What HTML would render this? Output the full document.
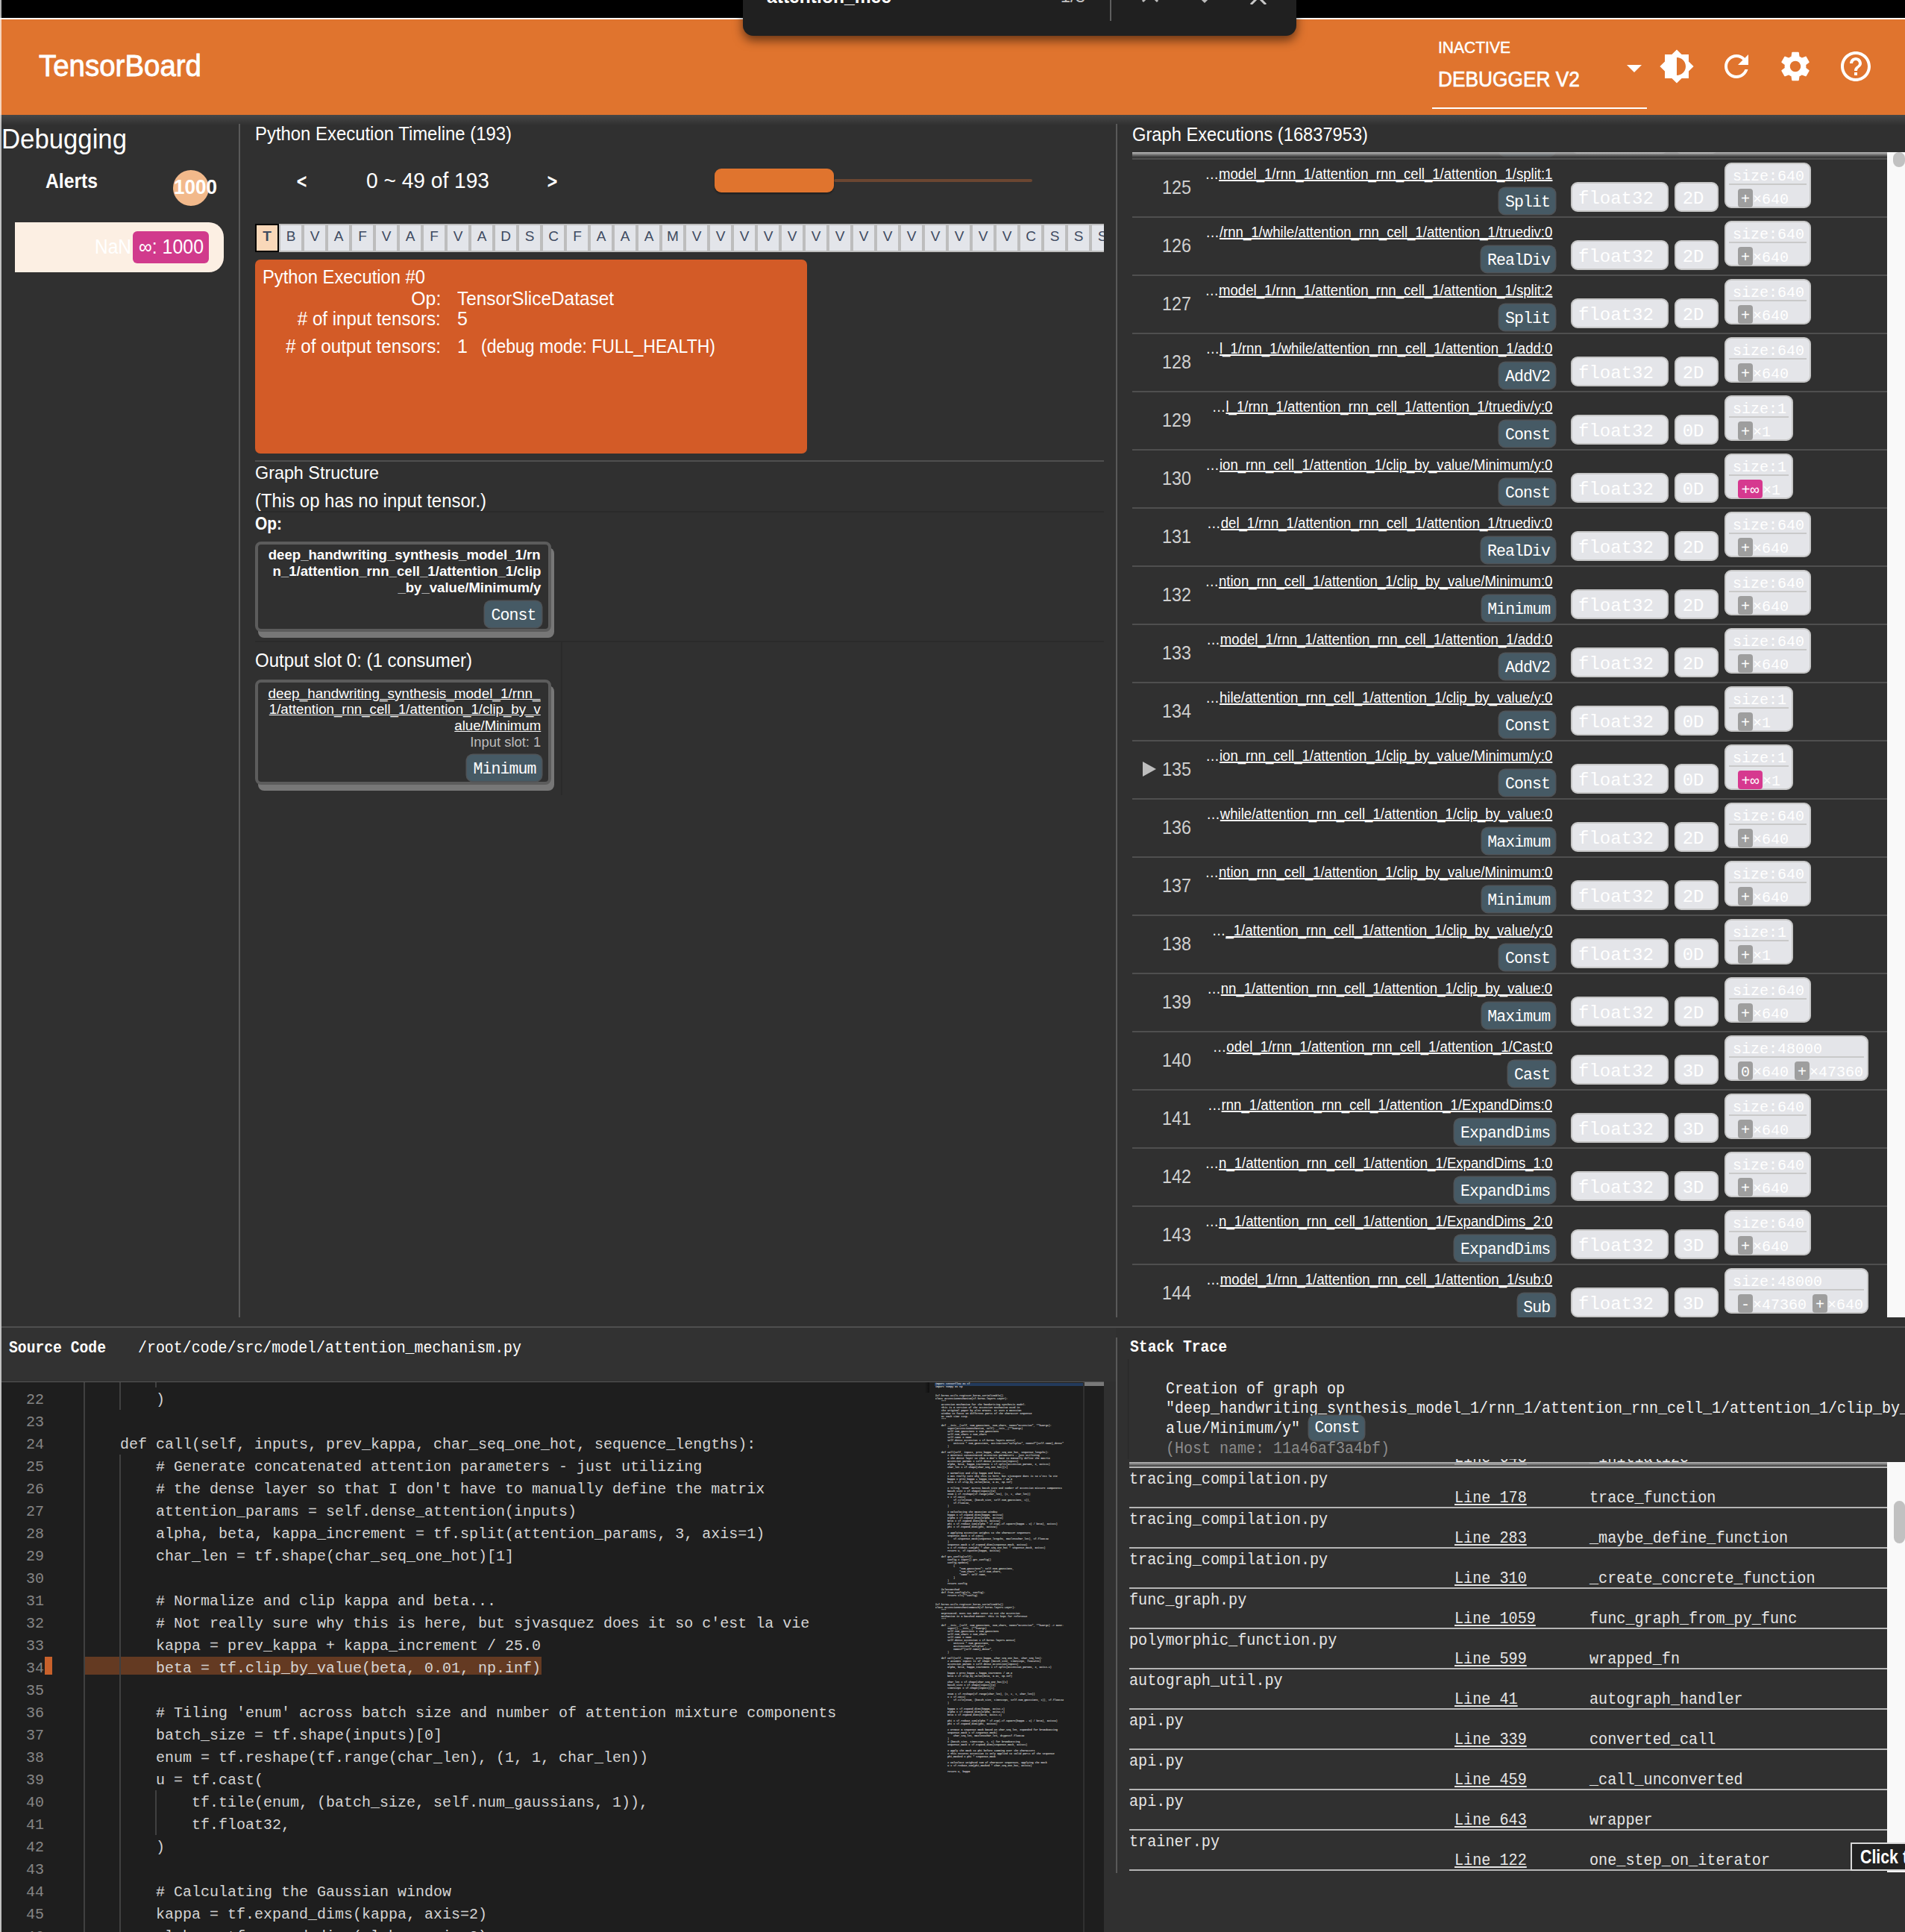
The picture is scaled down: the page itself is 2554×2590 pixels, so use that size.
<!DOCTYPE html><html><head><meta charset="utf-8"><style>
html,body{margin:0;padding:0;}
body{width:2554px;height:2590px;background:#303030;position:relative;overflow:hidden;font-family:'Liberation Sans',sans-serif;}
.r{position:absolute;}
.t{position:absolute;line-height:1;white-space:pre;width:max-content;}
.cell{position:absolute;top:0;width:28px;height:34px;border:2px solid #bdbdbd;background:#e3e5ea;color:#3e4a60;font:19px/30px 'Liberation Sans',sans-serif;text-align:center;}
.cell.sel{border-color:#000;background:#f9d8b9;font-weight:700;}
.chip{position:absolute;box-sizing:border-box;background:#465a65;box-shadow:0 0 0 1.5px #4f5357;border-radius:8px;color:#fff;font:21.5px/39px 'Liberation Mono',monospace;letter-spacing:-0.9px;text-indent:0.9px;text-align:center;}
.lchip{position:absolute;box-sizing:border-box;background:#e4e5e9;border:2px solid #c6c6c6;border-radius:9px;}
.lchip span{position:absolute;top:3px;line-height:35px;font-family:'Liberation Mono',monospace;font-size:24px;color:#fff;white-space:pre;}
.sbox{position:absolute;box-sizing:border-box;background:#e4e5e9;border:2px solid #c6c6c6;border-radius:9px;}
.stxt{position:absolute;left:9px;top:5px;font:20px/24px 'Liberation Mono',monospace;color:#fff;white-space:pre;}
.sdiv{position:absolute;left:4px;top:26px;height:2px;background:#c9c9c9;}
.pchip{position:absolute;top:33px;width:20px;height:25px;background:#9e9e9e;border-radius:4px;color:#fff;font:20px/30px 'Liberation Mono',monospace;text-align:center;}
.pchip.pink{background:#d6398f;}
.ptxt{position:absolute;top:35px;font:20px/25px 'Liberation Mono',monospace;color:#fff;white-space:pre;}
</style></head><body>
<div class="r" style="left:0px;top:0px;width:2554px;height:24px;background:#000;"></div>
<div class="r" style="left:0px;top:24px;width:2554px;height:2px;background:#fff;"></div>
<div class="r" style="left:0px;top:26px;width:2554px;height:128px;background:#e0742e;"></div>
<div class="r" style="left:0px;top:154px;width:2554px;height:14px;background:linear-gradient(#474747,#303030);"></div>
<div id="title" class="t" style="left:52px;top:68.29px;font-family:'Liberation Sans', sans-serif;font-size:41px;font-weight:400;color:#fff;transform:scaleX(0.9378);transform-origin:left 0;-webkit-text-stroke:0.9px #fff;">TensorBoard</div>
<div id="inactive" class="t" style="left:1928px;top:52.88px;font-family:'Liberation Sans', sans-serif;font-size:22px;font-weight:400;color:#fff;transform:scaleX(0.9560);transform-origin:left 0;-webkit-text-stroke:0.5px #fff;">INACTIVE</div>
<div id="dbg" class="t" style="left:1928px;top:90.61px;font-family:'Liberation Sans', sans-serif;font-size:30px;font-weight:400;color:#fff;transform:scaleX(0.8766);transform-origin:left 0;-webkit-text-stroke:0.7px #fff;">DEBUGGER V2</div>
<div class="r" style="left:1920px;top:144px;width:288px;height:2px;background:#fff;"></div>
<svg class="r" style="left:2180px;top:86px" width="22" height="12" viewBox="0 0 22 12"><path d="M1 1h20L11 11z" fill="#fff"/></svg>
<svg class="r" style="left:2224px;top:65px" width="48" height="48" viewBox="0 0 24 24"><path fill="#fff" fill-rule="evenodd" d="M20 15.31L23.31 12 20 8.69V4h-4.69L12 .69 8.69 4H4v4.69L.69 12 4 15.31V20h4.69L12 23.31 15.31 20H20v-4.69zM12 18V6c3.31 0 6 2.69 6 6s-2.69 6-6 6z"/></svg>
<svg class="r" style="left:2304px;top:65px" width="48" height="48" viewBox="0 0 24 24"><path fill="#fff" fill-rule="evenodd" d="M17.65 6.35C16.2 4.9 14.21 4 12 4c-4.42 0-7.99 3.58-7.99 8s3.57 8 7.99 8c3.73 0 6.84-2.55 7.73-6h-2.08c-.82 2.33-3.04 4-5.65 4-3.31 0-6-2.69-6-6s2.69-6 6-6c1.66 0 3.140.69 4.22 1.78L13 11h7V4l-2.35 2.35z"/></svg>
<svg class="r" style="left:2383px;top:65px" width="48" height="48" viewBox="0 0 24 24"><path fill="#fff" fill-rule="evenodd" d="M19.14 12.94c.04-.3.06-.61.06-.94 0-.32-.02-.64-.07-.94l2.03-1.58c.18-.14.23-.41.12-.61l-1.92-3.32c-.12-.22-.37-.29-.59-.22l-2.39.96c-.5-.38-1.03-.7-1.62-.94l-.36-2.54c-.04-.24-.24-.41-.48-.41h-3.84c-.24 0-.43.17-.47.41l-.36 2.54c-.59.24-1.13.57-1.62.94l-2.39-.96c-.22-.08-.47 0-.59.22L2.74 8.87c-.12.21-.08.47.12.61l2.03 1.58c-.05.3-.09.63-.09.94s.02.64.07.94l-2.030 1.58c-.18.14-.23.41-.12.61l1.92 3.32c.12.22.37.29.59.22l2.39-.96c.5.38 1.03.7 1.62.94l.36 2.54c.05.24.24.41.48.41h3.84c.24 0 .44-.17.47-.41l.36-2.54c.59-.24 1.13-.56 1.62-.94l2.39.96c.22.08.47 0 .59-.22l1.92-3.32c.12-.22.07-.47-.12-.61l-2.01-1.58zM12 15.6c-1.98 0-3.6-1.62-3.6-3.6s1.62-3.6 3.6-3.6 3.6 1.62 3.6 3.6-1.62 3.6-3.6 3.6z"/></svg>
<svg class="r" style="left:2464px;top:65px" width="48" height="48" viewBox="0 0 24 24"><path fill="#fff" fill-rule="evenodd" d="M11 18h2v-2h-2v2zm1-16C6.48 2 2 6.480 2 12s4.48 10 10 10 10-4.48 10-10S17.52 2 12 2zm0 18c-4.41 0-8-3.59-8-8s3.590-8 8-8 8 3.59 8 8-3.59 8-8 8zm0-14c-2.21 0-4 1.79-4 4h2c0-1.1.9-2 2-2s2 .9 2 2c0 2-3 1.75-3 5h2c0-2.25 3-2.5 3-5 0-2.21-1.79-4-4-4z"/></svg>
<div class="r" style="left:996px;top:-30px;width:742px;height:78px;background:#202020;border-radius:0 0 14px 14px;box-shadow:0 6px 14px rgba(0,0,0,0.55);"></div>
<div id="findtxt" class="t" style="left:1028px;top:-18.01px;font-family:'Liberation Sans', sans-serif;font-size:26px;font-weight:700;color:#fff;transform:scaleX(0.9474);transform-origin:left 0;">attention_mec</div>
<div class="t" style="left:1455px;top:-17.32px;width:0;height:0;"><div id="find13" class="t" style="right:0;top:0;font-family:'Liberation Sans', sans-serif;font-size:24px;font-weight:400;color:#c0c0c0;">1/3</div></div>
<div class="r" style="left:1488px;top:0px;width:2px;height:28px;background:#5f5f5f;"></div>
<svg class="r" style="left:1500px;top:-30px" width="220" height="36" viewBox="0 0 220 36"><path d="M32 32l10-10 10 10" stroke="#bdbdbd" stroke-width="3" fill="none"/><path d="M105 22l10 10 10-10" stroke="#bdbdbd" stroke-width="3" fill="none"/><path d="M177 36l20-20M197 36l-20-20" stroke="#c8c8c8" stroke-width="3" fill="none"/></svg>
<div id="debugging" class="t" style="left:2px;top:168.53px;font-family:'Liberation Sans', sans-serif;font-size:36px;font-weight:400;color:#fff;transform:scaleX(0.9647);transform-origin:left 0;">Debugging</div>
<div class="r" style="left:320px;top:166px;width:2px;height:1600px;background:#595959;"></div>
<div id="alerts" class="t" style="left:61px;top:229.64px;font-family:'Liberation Sans', sans-serif;font-size:27px;font-weight:700;color:#fff;transform:scaleX(0.9147);transform-origin:left 0;">Alerts</div>
<div class="r" style="left:232px;top:228px;width:48px;height:48px;border-radius:50%;background:#f2b98b;"></div>
<div id="badge" class="t" style="left:233px;top:238.14px;font-family:'Liberation Sans', sans-serif;font-size:27px;font-weight:700;color:#fff;transform:scaleX(0.9654);transform-origin:left 0;">1000</div>
<div class="r" style="left:20px;top:298px;width:280px;height:67px;background:#fcefe3;border-radius:0 20px 20px 0;"></div>
<div id="nan" class="t" style="left:127px;top:318.14px;font-family:'Liberation Sans', sans-serif;font-size:27px;font-weight:400;color:#fff;transform:scaleX(0.9071);transform-origin:left 0;">NaN</div>
<div class="r" style="left:178px;top:310px;width:102px;height:43px;background:#d13a8c;border-radius:6px;"></div>
<div id="inf1000" class="t" style="left:186px;top:318.14px;font-family:'Liberation Sans', sans-serif;font-size:27px;font-weight:400;color:#fff;transform:scaleX(0.9223);transform-origin:left 0;">∞: 1000</div>
<div id="pyexec_title" class="t" style="left:342px;top:166.84px;font-family:'Liberation Sans', sans-serif;font-size:25px;font-weight:400;color:#fff;transform:scaleX(0.9558);transform-origin:left 0;">Python Execution Timeline (193)</div>
<div id="lt" class="t" style="left:398px;top:229.99px;font-family:'Liberation Sans', sans-serif;font-size:26px;font-weight:400;color:#fff;transform:scaleX(0.8560);transform-origin:left 0;-webkit-text-stroke:1px #fff;">&lt;</div>
<div id="range" class="t" style="left:490.7px;top:228.25px;font-family:'Liberation Sans', sans-serif;font-size:29px;font-weight:400;color:#fff;transform:scaleX(0.9699);transform-origin:left 0;">0 ~ 49 of 193</div>
<div id="gt" class="t" style="left:734px;top:229.99px;font-family:'Liberation Sans', sans-serif;font-size:26px;font-weight:400;color:#fff;transform:scaleX(0.8560);transform-origin:left 0;-webkit-text-stroke:1px #fff;">&gt;</div>
<div class="r" style="left:1118px;top:240px;width:266px;height:4px;background:#6b4631;border-radius:2px;"></div>
<div class="r" style="left:958px;top:226px;width:160px;height:32px;background:#e0742e;border-radius:9px;box-shadow:0 2px 2px rgba(0,0,0,0.35);"></div>
<div class="r" style="left:342px;top:300px;width:1138px;height:38px;overflow:hidden;">
<div class="cell sel" style="left:0px">T</div>
<div class="cell" style="left:32px">B</div>
<div class="cell" style="left:64px">V</div>
<div class="cell" style="left:96px">A</div>
<div class="cell" style="left:128px">F</div>
<div class="cell" style="left:160px">V</div>
<div class="cell" style="left:192px">A</div>
<div class="cell" style="left:224px">F</div>
<div class="cell" style="left:256px">V</div>
<div class="cell" style="left:288px">A</div>
<div class="cell" style="left:320px">D</div>
<div class="cell" style="left:352px">S</div>
<div class="cell" style="left:384px">C</div>
<div class="cell" style="left:416px">F</div>
<div class="cell" style="left:448px">A</div>
<div class="cell" style="left:480px">A</div>
<div class="cell" style="left:512px">A</div>
<div class="cell" style="left:544px">M</div>
<div class="cell" style="left:576px">V</div>
<div class="cell" style="left:608px">V</div>
<div class="cell" style="left:640px">V</div>
<div class="cell" style="left:672px">V</div>
<div class="cell" style="left:704px">V</div>
<div class="cell" style="left:736px">V</div>
<div class="cell" style="left:768px">V</div>
<div class="cell" style="left:800px">V</div>
<div class="cell" style="left:832px">V</div>
<div class="cell" style="left:864px">V</div>
<div class="cell" style="left:896px">V</div>
<div class="cell" style="left:928px">V</div>
<div class="cell" style="left:960px">V</div>
<div class="cell" style="left:992px">V</div>
<div class="cell" style="left:1024px">C</div>
<div class="cell" style="left:1056px">S</div>
<div class="cell" style="left:1088px">S</div>
<div class="cell" style="left:1120px">S</div>
</div>
<div class="r" style="left:342px;top:348px;width:740px;height:260px;background:#d35b27;border-radius:7px;"></div>
<div id="pe0" class="t" style="left:352px;top:359.24px;font-family:'Liberation Sans', sans-serif;font-size:25px;font-weight:400;color:#fff;transform:scaleX(0.9506);transform-origin:left 0;">Python Execution #0</div>
<div class="t" style="left:591px;top:387.54px;width:0;height:0;"><div id="op_lbl" class="t" style="right:0;top:0;font-family:'Liberation Sans', sans-serif;font-size:25px;font-weight:400;color:#fff;transform:scaleX(0.9926);transform-origin:right 0;">Op:</div></div>
<div id="tsd" class="t" style="left:613px;top:387.54px;font-family:'Liberation Sans', sans-serif;font-size:25px;font-weight:400;color:#fff;transform:scaleX(0.9750);transform-origin:left 0;">TensorSliceDataset</div>
<div class="t" style="left:591px;top:414.84px;width:0;height:0;"><div id="nin" class="t" style="right:0;top:0;font-family:'Liberation Sans', sans-serif;font-size:25px;font-weight:400;color:#fff;transform:scaleX(0.9661);transform-origin:right 0;"># of input tensors:</div></div>
<div id="five" class="t" style="left:613px;top:414.84px;font-family:'Liberation Sans', sans-serif;font-size:25px;font-weight:400;color:#fff;">5</div>
<div class="t" style="left:591px;top:452.24px;width:0;height:0;"><div id="nout" class="t" style="right:0;top:0;font-family:'Liberation Sans', sans-serif;font-size:25px;font-weight:400;color:#fff;transform:scaleX(0.9718);transform-origin:right 0;"># of output tensors:</div></div>
<div id="one" class="t" style="left:613px;top:452.24px;font-family:'Liberation Sans', sans-serif;font-size:25px;font-weight:400;color:#fff;">1</div>
<div id="dbgmode" class="t" style="left:645px;top:452.24px;font-family:'Liberation Sans', sans-serif;font-size:25px;font-weight:400;color:#fff;transform:scaleX(0.9199);transform-origin:left 0;">(debug mode: FULL_HEALTH)</div>
<div class="r" style="left:342px;top:617px;width:1138px;height:2px;background:#4f4f4f;"></div>
<div id="gs" class="t" style="left:342px;top:621.68px;font-family:'Liberation Sans', sans-serif;font-size:24px;font-weight:400;color:#fff;transform:scaleX(0.9722);transform-origin:left 0;">Graph Structure</div>
<div id="noinp" class="t" style="left:342px;top:659.14px;font-family:'Liberation Sans', sans-serif;font-size:25px;font-weight:400;color:#fff;transform:scaleX(0.9574);transform-origin:left 0;">(This op has no input tensor.)</div>
<div class="r" style="left:342px;top:685px;width:1138px;height:2px;background:#2a2a2a;"></div>
<div id="opb" class="t" style="left:342px;top:689.68px;font-family:'Liberation Sans', sans-serif;font-size:24px;font-weight:700;color:#fff;transform:scaleX(0.8711);transform-origin:left 0;">Op:</div>
<div class="r" style="left:342px;top:726px;width:397px;height:121px;box-sizing:border-box;border:4px solid #5c5c5c;border-radius:8px;background:#303030;box-shadow:4px 8px 0 0 #777;"></div>
<div class="t" style="left:725px;top:733.92px;width:0;height:0;"><div id="opl1" class="t" style="right:0;top:0;font-family:'Liberation Sans', sans-serif;font-size:19px;font-weight:700;color:#fff;transform:scaleX(0.9793);transform-origin:right 0;">deep_handwriting_synthesis_model_1/rn</div></div>
<div class="t" style="left:725px;top:755.92px;width:0;height:0;"><div id="opl2" class="t" style="right:0;top:0;font-family:'Liberation Sans', sans-serif;font-size:19px;font-weight:700;color:#fff;transform:scaleX(0.9798);transform-origin:right 0;">n_1/attention_rnn_cell_1/attention_1/clip</div></div>
<div class="t" style="left:725px;top:777.92px;width:0;height:0;"><div id="opl3" class="t" style="right:0;top:0;font-family:'Liberation Sans', sans-serif;font-size:19px;font-weight:700;color:#fff;transform:scaleX(0.9776);transform-origin:right 0;">_by_value/Minimum/y</div></div>
<div class="chip" style="left:650px;top:806px;width:76px;height:35px;">Const</div>
<div class="r" style="left:342px;top:859px;width:1138px;height:2px;background:#2a2a2a;"></div>
<div class="r" style="left:752px;top:861px;width:2px;height:205px;background:#2a2a2a;"></div>
<div id="outslot" class="t" style="left:342px;top:872.84px;font-family:'Liberation Sans', sans-serif;font-size:25px;font-weight:400;color:#fff;transform:scaleX(0.9607);transform-origin:left 0;">Output slot 0: (1 consumer)</div>
<div class="r" style="left:342px;top:911px;width:397px;height:141px;box-sizing:border-box;border:4px solid #5c5c5c;border-radius:8px;background:#303030;box-shadow:4px 8px 0 0 #777;"></div>
<div class="t" style="left:725px;top:919.62px;width:0;height:0;"><div id="cl1" class="t" style="right:0;top:0;font-family:'Liberation Sans', sans-serif;font-size:19px;font-weight:400;color:#fff;transform:scaleX(0.9958);transform-origin:right 0;text-decoration:underline;">deep_handwriting_synthesis_model_1/rnn_</div></div>
<div class="t" style="left:725px;top:940.92px;width:0;height:0;"><div id="cl2" class="t" style="right:0;top:0;font-family:'Liberation Sans', sans-serif;font-size:19px;font-weight:400;color:#fff;transform:scaleX(0.9817);transform-origin:right 0;text-decoration:underline;">1/attention_rnn_cell_1/attention_1/clip_by_v</div></div>
<div class="t" style="left:725px;top:962.92px;width:0;height:0;"><div id="cl3" class="t" style="right:0;top:0;font-family:'Liberation Sans', sans-serif;font-size:19px;font-weight:400;color:#fff;transform:scaleX(0.9808);transform-origin:right 0;text-decoration:underline;">alue/Minimum</div></div>
<div class="t" style="left:725px;top:984.62px;width:0;height:0;"><div id="inslot" class="t" style="right:0;top:0;font-family:'Liberation Sans', sans-serif;font-size:19px;font-weight:400;color:#bdbdbd;transform:scaleX(0.9671);transform-origin:right 0;">Input slot: 1</div></div>
<div class="chip" style="left:626px;top:1012px;width:100px;height:35px;">Minimum</div>
<div class="r" style="left:1496px;top:166px;width:2px;height:1600px;background:#595959;"></div>
<div id="ge_title" class="t" style="left:1518px;top:167.84px;font-family:'Liberation Sans', sans-serif;font-size:25px;font-weight:400;color:#fff;transform:scaleX(0.9474);transform-origin:left 0;">Graph Executions (16837953)</div>
<div class="r" style="left:2530px;top:204px;width:24px;height:1562px;background:#f9f9f9;"></div>
<div class="r" style="left:2538px;top:204px;width:16px;height:20px;background:#c1c1c1;border-radius:8px;"></div>
<div class="r" style="left:1518px;top:204px;width:1012px;height:1562px;overflow:hidden;">
<div id="n124" class="t" style="left:40px;top:-44.01px;font-family:'Liberation Sans', sans-serif;font-size:26px;font-weight:400;color:#cfcfcf;transform:scaleX(0.8988);transform-origin:left 0;">124</div>
<div class="t" style="left:563px;top:-59.23px;width:0;height:0;"><div id="nm124" class="t" style="right:0;top:0;font-family:'Liberation Sans', sans-serif;font-size:20px;font-weight:400;color:#fff;transform:scaleX(0.9294);transform-origin:right 0;text-underline-offset:1px;text-decoration-thickness:1.5px;">…<u>ion_rnn_cell_1/attention_1/clip_by_value/Minimum/y:0</u></div></div>
<div class="chip" style="left:492.0px;top:-30px;width:75px;height:35px;">Const</div>
<div class="lchip" style="left:588px;top:-38px;width:131px;height:40px;"><span style="left:8px;width:97px">float32</span></div>
<div class="lchip" style="left:727px;top:-38px;width:59px;height:40px;"><span style="left:8.7px;width:28.2px">0D</span></div>
<div class="sbox" style="left:794px;top:-64px;width:91.5px;height:61px;"><div class="stxt">size:1</div><div class="sdiv" style="width:79.5px"></div>
<div class="pchip" style="left:16px;">+</div>
<div class="ptxt" style="left:36px;">×1</div>
</div>
<div class="r" style="left:0px;top:8px;width:1012px;height:2px;background:#4f4f4f;"></div>
<div id="n125" class="t" style="left:40px;top:33.99px;font-family:'Liberation Sans', sans-serif;font-size:26px;font-weight:400;color:#cfcfcf;transform:scaleX(0.8988);transform-origin:left 0;">125</div>
<div class="t" style="left:563px;top:18.77px;width:0;height:0;"><div id="nm125" class="t" style="right:0;top:0;font-family:'Liberation Sans', sans-serif;font-size:20px;font-weight:400;color:#fff;transform:scaleX(0.9293);transform-origin:right 0;text-underline-offset:1px;text-decoration-thickness:1.5px;">…<u>model_1/rnn_1/attention_rnn_cell_1/attention_1/split:1</u></div></div>
<div class="chip" style="left:492.0px;top:48px;width:75px;height:35px;">Split</div>
<div class="lchip" style="left:588px;top:40px;width:131px;height:40px;"><span style="left:8px;width:97px">float32</span></div>
<div class="lchip" style="left:727px;top:40px;width:59px;height:40px;"><span style="left:8.7px;width:28.2px">2D</span></div>
<div class="sbox" style="left:794px;top:14px;width:115.5px;height:61px;"><div class="stxt">size:640</div><div class="sdiv" style="width:103.5px"></div>
<div class="pchip" style="left:16px;">+</div>
<div class="ptxt" style="left:36px;">×640</div>
</div>
<div class="r" style="left:0px;top:86px;width:1012px;height:2px;background:#4f4f4f;"></div>
<div id="n126" class="t" style="left:40px;top:111.99px;font-family:'Liberation Sans', sans-serif;font-size:26px;font-weight:400;color:#cfcfcf;transform:scaleX(0.8988);transform-origin:left 0;">126</div>
<div class="t" style="left:563px;top:96.77px;width:0;height:0;"><div id="nm126" class="t" style="right:0;top:0;font-family:'Liberation Sans', sans-serif;font-size:20px;font-weight:400;color:#fff;transform:scaleX(0.9294);transform-origin:right 0;text-underline-offset:1px;text-decoration-thickness:1.5px;">…<u>/rnn_1/while/attention_rnn_cell_1/attention_1/truediv:0</u></div></div>
<div class="chip" style="left:468.0px;top:126px;width:99px;height:35px;">RealDiv</div>
<div class="lchip" style="left:588px;top:118px;width:131px;height:40px;"><span style="left:8px;width:97px">float32</span></div>
<div class="lchip" style="left:727px;top:118px;width:59px;height:40px;"><span style="left:8.7px;width:28.2px">2D</span></div>
<div class="sbox" style="left:794px;top:92px;width:115.5px;height:61px;"><div class="stxt">size:640</div><div class="sdiv" style="width:103.5px"></div>
<div class="pchip" style="left:16px;">+</div>
<div class="ptxt" style="left:36px;">×640</div>
</div>
<div class="r" style="left:0px;top:164px;width:1012px;height:2px;background:#4f4f4f;"></div>
<div id="n127" class="t" style="left:40px;top:189.99px;font-family:'Liberation Sans', sans-serif;font-size:26px;font-weight:400;color:#cfcfcf;transform:scaleX(0.8988);transform-origin:left 0;">127</div>
<div class="t" style="left:563px;top:174.77px;width:0;height:0;"><div id="nm127" class="t" style="right:0;top:0;font-family:'Liberation Sans', sans-serif;font-size:20px;font-weight:400;color:#fff;transform:scaleX(0.9293);transform-origin:right 0;text-underline-offset:1px;text-decoration-thickness:1.5px;">…<u>model_1/rnn_1/attention_rnn_cell_1/attention_1/split:2</u></div></div>
<div class="chip" style="left:492.0px;top:204px;width:75px;height:35px;">Split</div>
<div class="lchip" style="left:588px;top:196px;width:131px;height:40px;"><span style="left:8px;width:97px">float32</span></div>
<div class="lchip" style="left:727px;top:196px;width:59px;height:40px;"><span style="left:8.7px;width:28.2px">2D</span></div>
<div class="sbox" style="left:794px;top:170px;width:115.5px;height:61px;"><div class="stxt">size:640</div><div class="sdiv" style="width:103.5px"></div>
<div class="pchip" style="left:16px;">+</div>
<div class="ptxt" style="left:36px;">×640</div>
</div>
<div class="r" style="left:0px;top:242px;width:1012px;height:2px;background:#4f4f4f;"></div>
<div id="n128" class="t" style="left:40px;top:267.99px;font-family:'Liberation Sans', sans-serif;font-size:26px;font-weight:400;color:#cfcfcf;transform:scaleX(0.8988);transform-origin:left 0;">128</div>
<div class="t" style="left:563px;top:252.77px;width:0;height:0;"><div id="nm128" class="t" style="right:0;top:0;font-family:'Liberation Sans', sans-serif;font-size:20px;font-weight:400;color:#fff;transform:scaleX(0.9293);transform-origin:right 0;text-underline-offset:1px;text-decoration-thickness:1.5px;">…<u>l_1/rnn_1/while/attention_rnn_cell_1/attention_1/add:0</u></div></div>
<div class="chip" style="left:492.0px;top:282px;width:75px;height:35px;">AddV2</div>
<div class="lchip" style="left:588px;top:274px;width:131px;height:40px;"><span style="left:8px;width:97px">float32</span></div>
<div class="lchip" style="left:727px;top:274px;width:59px;height:40px;"><span style="left:8.7px;width:28.2px">2D</span></div>
<div class="sbox" style="left:794px;top:248px;width:115.5px;height:61px;"><div class="stxt">size:640</div><div class="sdiv" style="width:103.5px"></div>
<div class="pchip" style="left:16px;">+</div>
<div class="ptxt" style="left:36px;">×640</div>
</div>
<div class="r" style="left:0px;top:320px;width:1012px;height:2px;background:#4f4f4f;"></div>
<div id="n129" class="t" style="left:40px;top:345.99px;font-family:'Liberation Sans', sans-serif;font-size:26px;font-weight:400;color:#cfcfcf;transform:scaleX(0.8988);transform-origin:left 0;">129</div>
<div class="t" style="left:563px;top:330.77px;width:0;height:0;"><div id="nm129" class="t" style="right:0;top:0;font-family:'Liberation Sans', sans-serif;font-size:20px;font-weight:400;color:#fff;transform:scaleX(0.9291);transform-origin:right 0;text-underline-offset:1px;text-decoration-thickness:1.5px;">…<u>l_1/rnn_1/attention_rnn_cell_1/attention_1/truediv/y:0</u></div></div>
<div class="chip" style="left:492.0px;top:360px;width:75px;height:35px;">Const</div>
<div class="lchip" style="left:588px;top:352px;width:131px;height:40px;"><span style="left:8px;width:97px">float32</span></div>
<div class="lchip" style="left:727px;top:352px;width:59px;height:40px;"><span style="left:8.7px;width:28.2px">0D</span></div>
<div class="sbox" style="left:794px;top:326px;width:91.5px;height:61px;"><div class="stxt">size:1</div><div class="sdiv" style="width:79.5px"></div>
<div class="pchip" style="left:16px;">+</div>
<div class="ptxt" style="left:36px;">×1</div>
</div>
<div class="r" style="left:0px;top:398px;width:1012px;height:2px;background:#4f4f4f;"></div>
<div id="n130" class="t" style="left:40px;top:423.99px;font-family:'Liberation Sans', sans-serif;font-size:26px;font-weight:400;color:#cfcfcf;transform:scaleX(0.8988);transform-origin:left 0;">130</div>
<div class="t" style="left:563px;top:408.77px;width:0;height:0;"><div id="nm130" class="t" style="right:0;top:0;font-family:'Liberation Sans', sans-serif;font-size:20px;font-weight:400;color:#fff;transform:scaleX(0.9294);transform-origin:right 0;text-underline-offset:1px;text-decoration-thickness:1.5px;">…<u>ion_rnn_cell_1/attention_1/clip_by_value/Minimum/y:0</u></div></div>
<div class="chip" style="left:492.0px;top:438px;width:75px;height:35px;">Const</div>
<div class="lchip" style="left:588px;top:430px;width:131px;height:40px;"><span style="left:8px;width:97px">float32</span></div>
<div class="lchip" style="left:727px;top:430px;width:59px;height:40px;"><span style="left:8.7px;width:28.2px">0D</span></div>
<div class="sbox" style="left:794px;top:404px;width:91.5px;height:61px;"><div class="stxt">size:1</div><div class="sdiv" style="width:79.5px"></div>
<div class="pchip pink" style="left:16px;width:33px;">+∞</div>
<div class="ptxt" style="left:49px;">×1</div>
</div>
<div class="r" style="left:0px;top:476px;width:1012px;height:2px;background:#4f4f4f;"></div>
<div id="n131" class="t" style="left:40px;top:501.99px;font-family:'Liberation Sans', sans-serif;font-size:26px;font-weight:400;color:#cfcfcf;transform:scaleX(0.8988);transform-origin:left 0;">131</div>
<div class="t" style="left:563px;top:486.77px;width:0;height:0;"><div id="nm131" class="t" style="right:0;top:0;font-family:'Liberation Sans', sans-serif;font-size:20px;font-weight:400;color:#fff;transform:scaleX(0.9295);transform-origin:right 0;text-underline-offset:1px;text-decoration-thickness:1.5px;">…<u>del_1/rnn_1/attention_rnn_cell_1/attention_1/truediv:0</u></div></div>
<div class="chip" style="left:468.0px;top:516px;width:99px;height:35px;">RealDiv</div>
<div class="lchip" style="left:588px;top:508px;width:131px;height:40px;"><span style="left:8px;width:97px">float32</span></div>
<div class="lchip" style="left:727px;top:508px;width:59px;height:40px;"><span style="left:8.7px;width:28.2px">2D</span></div>
<div class="sbox" style="left:794px;top:482px;width:115.5px;height:61px;"><div class="stxt">size:640</div><div class="sdiv" style="width:103.5px"></div>
<div class="pchip" style="left:16px;">+</div>
<div class="ptxt" style="left:36px;">×640</div>
</div>
<div class="r" style="left:0px;top:554px;width:1012px;height:2px;background:#4f4f4f;"></div>
<div id="n132" class="t" style="left:40px;top:579.99px;font-family:'Liberation Sans', sans-serif;font-size:26px;font-weight:400;color:#cfcfcf;transform:scaleX(0.8988);transform-origin:left 0;">132</div>
<div class="t" style="left:563px;top:564.77px;width:0;height:0;"><div id="nm132" class="t" style="right:0;top:0;font-family:'Liberation Sans', sans-serif;font-size:20px;font-weight:400;color:#fff;transform:scaleX(0.9294);transform-origin:right 0;text-underline-offset:1px;text-decoration-thickness:1.5px;">…<u>ntion_rnn_cell_1/attention_1/clip_by_value/Minimum:0</u></div></div>
<div class="chip" style="left:468.5px;top:594px;width:98.5px;height:35px;">Minimum</div>
<div class="lchip" style="left:588px;top:586px;width:131px;height:40px;"><span style="left:8px;width:97px">float32</span></div>
<div class="lchip" style="left:727px;top:586px;width:59px;height:40px;"><span style="left:8.7px;width:28.2px">2D</span></div>
<div class="sbox" style="left:794px;top:560px;width:115.5px;height:61px;"><div class="stxt">size:640</div><div class="sdiv" style="width:103.5px"></div>
<div class="pchip" style="left:16px;">+</div>
<div class="ptxt" style="left:36px;">×640</div>
</div>
<div class="r" style="left:0px;top:632px;width:1012px;height:2px;background:#4f4f4f;"></div>
<div id="n133" class="t" style="left:40px;top:657.99px;font-family:'Liberation Sans', sans-serif;font-size:26px;font-weight:400;color:#cfcfcf;transform:scaleX(0.8988);transform-origin:left 0;">133</div>
<div class="t" style="left:563px;top:642.77px;width:0;height:0;"><div id="nm133" class="t" style="right:0;top:0;font-family:'Liberation Sans', sans-serif;font-size:20px;font-weight:400;color:#fff;transform:scaleX(0.9294);transform-origin:right 0;text-underline-offset:1px;text-decoration-thickness:1.5px;">…<u>model_1/rnn_1/attention_rnn_cell_1/attention_1/add:0</u></div></div>
<div class="chip" style="left:492.0px;top:672px;width:75px;height:35px;">AddV2</div>
<div class="lchip" style="left:588px;top:664px;width:131px;height:40px;"><span style="left:8px;width:97px">float32</span></div>
<div class="lchip" style="left:727px;top:664px;width:59px;height:40px;"><span style="left:8.7px;width:28.2px">2D</span></div>
<div class="sbox" style="left:794px;top:638px;width:115.5px;height:61px;"><div class="stxt">size:640</div><div class="sdiv" style="width:103.5px"></div>
<div class="pchip" style="left:16px;">+</div>
<div class="ptxt" style="left:36px;">×640</div>
</div>
<div class="r" style="left:0px;top:710px;width:1012px;height:2px;background:#4f4f4f;"></div>
<div id="n134" class="t" style="left:40px;top:735.99px;font-family:'Liberation Sans', sans-serif;font-size:26px;font-weight:400;color:#cfcfcf;transform:scaleX(0.8988);transform-origin:left 0;">134</div>
<div class="t" style="left:563px;top:720.77px;width:0;height:0;"><div id="nm134" class="t" style="right:0;top:0;font-family:'Liberation Sans', sans-serif;font-size:20px;font-weight:400;color:#fff;transform:scaleX(0.9294);transform-origin:right 0;text-underline-offset:1px;text-decoration-thickness:1.5px;">…<u>hile/attention_rnn_cell_1/attention_1/clip_by_value/y:0</u></div></div>
<div class="chip" style="left:492.0px;top:750px;width:75px;height:35px;">Const</div>
<div class="lchip" style="left:588px;top:742px;width:131px;height:40px;"><span style="left:8px;width:97px">float32</span></div>
<div class="lchip" style="left:727px;top:742px;width:59px;height:40px;"><span style="left:8.7px;width:28.2px">0D</span></div>
<div class="sbox" style="left:794px;top:716px;width:91.5px;height:61px;"><div class="stxt">size:1</div><div class="sdiv" style="width:79.5px"></div>
<div class="pchip" style="left:16px;">+</div>
<div class="ptxt" style="left:36px;">×1</div>
</div>
<div class="r" style="left:0px;top:788px;width:1012px;height:2px;background:#4f4f4f;"></div>
<div id="n135" class="t" style="left:40px;top:813.99px;font-family:'Liberation Sans', sans-serif;font-size:26px;font-weight:400;color:#cfcfcf;transform:scaleX(0.8988);transform-origin:left 0;">135</div>
<svg class="r" style="left:13px;top:817px" width="20" height="20" viewBox="0 0 20 20"><path d="M1 0L19 10L1 20z" fill="#bdbdbd"/></svg>
<div class="t" style="left:563px;top:798.77px;width:0;height:0;"><div id="nm135" class="t" style="right:0;top:0;font-family:'Liberation Sans', sans-serif;font-size:20px;font-weight:400;color:#fff;transform:scaleX(0.9294);transform-origin:right 0;text-underline-offset:1px;text-decoration-thickness:1.5px;">…<u>ion_rnn_cell_1/attention_1/clip_by_value/Minimum/y:0</u></div></div>
<div class="chip" style="left:492.0px;top:828px;width:75px;height:35px;">Const</div>
<div class="lchip" style="left:588px;top:820px;width:131px;height:40px;"><span style="left:8px;width:97px">float32</span></div>
<div class="lchip" style="left:727px;top:820px;width:59px;height:40px;"><span style="left:8.7px;width:28.2px">0D</span></div>
<div class="sbox" style="left:794px;top:794px;width:91.5px;height:61px;"><div class="stxt">size:1</div><div class="sdiv" style="width:79.5px"></div>
<div class="pchip pink" style="left:16px;width:33px;">+∞</div>
<div class="ptxt" style="left:49px;">×1</div>
</div>
<div class="r" style="left:0px;top:866px;width:1012px;height:2px;background:#4f4f4f;"></div>
<div id="n136" class="t" style="left:40px;top:891.99px;font-family:'Liberation Sans', sans-serif;font-size:26px;font-weight:400;color:#cfcfcf;transform:scaleX(0.8988);transform-origin:left 0;">136</div>
<div class="t" style="left:563px;top:876.77px;width:0;height:0;"><div id="nm136" class="t" style="right:0;top:0;font-family:'Liberation Sans', sans-serif;font-size:20px;font-weight:400;color:#fff;transform:scaleX(0.9294);transform-origin:right 0;text-underline-offset:1px;text-decoration-thickness:1.5px;">…<u>while/attention_rnn_cell_1/attention_1/clip_by_value:0</u></div></div>
<div class="chip" style="left:468.5px;top:906px;width:98.5px;height:35px;">Maximum</div>
<div class="lchip" style="left:588px;top:898px;width:131px;height:40px;"><span style="left:8px;width:97px">float32</span></div>
<div class="lchip" style="left:727px;top:898px;width:59px;height:40px;"><span style="left:8.7px;width:28.2px">2D</span></div>
<div class="sbox" style="left:794px;top:872px;width:115.5px;height:61px;"><div class="stxt">size:640</div><div class="sdiv" style="width:103.5px"></div>
<div class="pchip" style="left:16px;">+</div>
<div class="ptxt" style="left:36px;">×640</div>
</div>
<div class="r" style="left:0px;top:944px;width:1012px;height:2px;background:#4f4f4f;"></div>
<div id="n137" class="t" style="left:40px;top:969.99px;font-family:'Liberation Sans', sans-serif;font-size:26px;font-weight:400;color:#cfcfcf;transform:scaleX(0.8988);transform-origin:left 0;">137</div>
<div class="t" style="left:563px;top:954.77px;width:0;height:0;"><div id="nm137" class="t" style="right:0;top:0;font-family:'Liberation Sans', sans-serif;font-size:20px;font-weight:400;color:#fff;transform:scaleX(0.9294);transform-origin:right 0;text-underline-offset:1px;text-decoration-thickness:1.5px;">…<u>ntion_rnn_cell_1/attention_1/clip_by_value/Minimum:0</u></div></div>
<div class="chip" style="left:468.5px;top:984px;width:98.5px;height:35px;">Minimum</div>
<div class="lchip" style="left:588px;top:976px;width:131px;height:40px;"><span style="left:8px;width:97px">float32</span></div>
<div class="lchip" style="left:727px;top:976px;width:59px;height:40px;"><span style="left:8.7px;width:28.2px">2D</span></div>
<div class="sbox" style="left:794px;top:950px;width:115.5px;height:61px;"><div class="stxt">size:640</div><div class="sdiv" style="width:103.5px"></div>
<div class="pchip" style="left:16px;">+</div>
<div class="ptxt" style="left:36px;">×640</div>
</div>
<div class="r" style="left:0px;top:1022px;width:1012px;height:2px;background:#4f4f4f;"></div>
<div id="n138" class="t" style="left:40px;top:1047.99px;font-family:'Liberation Sans', sans-serif;font-size:26px;font-weight:400;color:#cfcfcf;transform:scaleX(0.8988);transform-origin:left 0;">138</div>
<div class="t" style="left:563px;top:1032.77px;width:0;height:0;"><div id="nm138" class="t" style="right:0;top:0;font-family:'Liberation Sans', sans-serif;font-size:20px;font-weight:400;color:#fff;transform:scaleX(0.9291);transform-origin:right 0;text-underline-offset:1px;text-decoration-thickness:1.5px;">…<u>_1/attention_rnn_cell_1/attention_1/clip_by_value/y:0</u></div></div>
<div class="chip" style="left:492.0px;top:1062px;width:75px;height:35px;">Const</div>
<div class="lchip" style="left:588px;top:1054px;width:131px;height:40px;"><span style="left:8px;width:97px">float32</span></div>
<div class="lchip" style="left:727px;top:1054px;width:59px;height:40px;"><span style="left:8.7px;width:28.2px">0D</span></div>
<div class="sbox" style="left:794px;top:1028px;width:91.5px;height:61px;"><div class="stxt">size:1</div><div class="sdiv" style="width:79.5px"></div>
<div class="pchip" style="left:16px;">+</div>
<div class="ptxt" style="left:36px;">×1</div>
</div>
<div class="r" style="left:0px;top:1100px;width:1012px;height:2px;background:#4f4f4f;"></div>
<div id="n139" class="t" style="left:40px;top:1125.99px;font-family:'Liberation Sans', sans-serif;font-size:26px;font-weight:400;color:#cfcfcf;transform:scaleX(0.8988);transform-origin:left 0;">139</div>
<div class="t" style="left:563px;top:1110.77px;width:0;height:0;"><div id="nm139" class="t" style="right:0;top:0;font-family:'Liberation Sans', sans-serif;font-size:20px;font-weight:400;color:#fff;transform:scaleX(0.9294);transform-origin:right 0;text-underline-offset:1px;text-decoration-thickness:1.5px;">…<u>nn_1/attention_rnn_cell_1/attention_1/clip_by_value:0</u></div></div>
<div class="chip" style="left:468.5px;top:1140px;width:98.5px;height:35px;">Maximum</div>
<div class="lchip" style="left:588px;top:1132px;width:131px;height:40px;"><span style="left:8px;width:97px">float32</span></div>
<div class="lchip" style="left:727px;top:1132px;width:59px;height:40px;"><span style="left:8.7px;width:28.2px">2D</span></div>
<div class="sbox" style="left:794px;top:1106px;width:115.5px;height:61px;"><div class="stxt">size:640</div><div class="sdiv" style="width:103.5px"></div>
<div class="pchip" style="left:16px;">+</div>
<div class="ptxt" style="left:36px;">×640</div>
</div>
<div class="r" style="left:0px;top:1178px;width:1012px;height:2px;background:#4f4f4f;"></div>
<div id="n140" class="t" style="left:40px;top:1203.99px;font-family:'Liberation Sans', sans-serif;font-size:26px;font-weight:400;color:#cfcfcf;transform:scaleX(0.8988);transform-origin:left 0;">140</div>
<div class="t" style="left:563px;top:1188.77px;width:0;height:0;"><div id="nm140" class="t" style="right:0;top:0;font-family:'Liberation Sans', sans-serif;font-size:20px;font-weight:400;color:#fff;transform:scaleX(0.9291);transform-origin:right 0;text-underline-offset:1px;text-decoration-thickness:1.5px;">…<u>odel_1/rnn_1/attention_rnn_cell_1/attention_1/Cast:0</u></div></div>
<div class="chip" style="left:504.0px;top:1218px;width:63px;height:35px;">Cast</div>
<div class="lchip" style="left:588px;top:1210px;width:131px;height:40px;"><span style="left:8px;width:97px">float32</span></div>
<div class="lchip" style="left:727px;top:1210px;width:59px;height:40px;"><span style="left:8.7px;width:28.2px">3D</span></div>
<div class="sbox" style="left:794px;top:1184px;width:192.6px;height:61px;"><div class="stxt">size:48000</div><div class="sdiv" style="width:180.6px"></div>
<div class="pchip" style="left:16px;">0</div>
<div class="ptxt" style="left:36px;">×640</div>
<div class="pchip" style="left:92px;">+</div>
<div class="ptxt" style="left:112px;">×47360</div>
</div>
<div class="r" style="left:0px;top:1256px;width:1012px;height:2px;background:#4f4f4f;"></div>
<div id="n141" class="t" style="left:40px;top:1281.99px;font-family:'Liberation Sans', sans-serif;font-size:26px;font-weight:400;color:#cfcfcf;transform:scaleX(0.8988);transform-origin:left 0;">141</div>
<div class="t" style="left:563px;top:1266.77px;width:0;height:0;"><div id="nm141" class="t" style="right:0;top:0;font-family:'Liberation Sans', sans-serif;font-size:20px;font-weight:400;color:#fff;transform:scaleX(0.9296);transform-origin:right 0;text-underline-offset:1px;text-decoration-thickness:1.5px;">…<u>rnn_1/attention_rnn_cell_1/attention_1/ExpandDims:0</u></div></div>
<div class="chip" style="left:432.4px;top:1296px;width:134.6px;height:35px;">ExpandDims</div>
<div class="lchip" style="left:588px;top:1288px;width:131px;height:40px;"><span style="left:8px;width:97px">float32</span></div>
<div class="lchip" style="left:727px;top:1288px;width:59px;height:40px;"><span style="left:8.7px;width:28.2px">3D</span></div>
<div class="sbox" style="left:794px;top:1262px;width:115.5px;height:61px;"><div class="stxt">size:640</div><div class="sdiv" style="width:103.5px"></div>
<div class="pchip" style="left:16px;">+</div>
<div class="ptxt" style="left:36px;">×640</div>
</div>
<div class="r" style="left:0px;top:1334px;width:1012px;height:2px;background:#4f4f4f;"></div>
<div id="n142" class="t" style="left:40px;top:1359.99px;font-family:'Liberation Sans', sans-serif;font-size:26px;font-weight:400;color:#cfcfcf;transform:scaleX(0.8988);transform-origin:left 0;">142</div>
<div class="t" style="left:563px;top:1344.77px;width:0;height:0;"><div id="nm142" class="t" style="right:0;top:0;font-family:'Liberation Sans', sans-serif;font-size:20px;font-weight:400;color:#fff;transform:scaleX(0.9293);transform-origin:right 0;text-underline-offset:1px;text-decoration-thickness:1.5px;">…<u>n_1/attention_rnn_cell_1/attention_1/ExpandDims_1:0</u></div></div>
<div class="chip" style="left:432.4px;top:1374px;width:134.6px;height:35px;">ExpandDims</div>
<div class="lchip" style="left:588px;top:1366px;width:131px;height:40px;"><span style="left:8px;width:97px">float32</span></div>
<div class="lchip" style="left:727px;top:1366px;width:59px;height:40px;"><span style="left:8.7px;width:28.2px">3D</span></div>
<div class="sbox" style="left:794px;top:1340px;width:115.5px;height:61px;"><div class="stxt">size:640</div><div class="sdiv" style="width:103.5px"></div>
<div class="pchip" style="left:16px;">+</div>
<div class="ptxt" style="left:36px;">×640</div>
</div>
<div class="r" style="left:0px;top:1412px;width:1012px;height:2px;background:#4f4f4f;"></div>
<div id="n143" class="t" style="left:40px;top:1437.99px;font-family:'Liberation Sans', sans-serif;font-size:26px;font-weight:400;color:#cfcfcf;transform:scaleX(0.8988);transform-origin:left 0;">143</div>
<div class="t" style="left:563px;top:1422.77px;width:0;height:0;"><div id="nm143" class="t" style="right:0;top:0;font-family:'Liberation Sans', sans-serif;font-size:20px;font-weight:400;color:#fff;transform:scaleX(0.9293);transform-origin:right 0;text-underline-offset:1px;text-decoration-thickness:1.5px;">…<u>n_1/attention_rnn_cell_1/attention_1/ExpandDims_2:0</u></div></div>
<div class="chip" style="left:432.4px;top:1452px;width:134.6px;height:35px;">ExpandDims</div>
<div class="lchip" style="left:588px;top:1444px;width:131px;height:40px;"><span style="left:8px;width:97px">float32</span></div>
<div class="lchip" style="left:727px;top:1444px;width:59px;height:40px;"><span style="left:8.7px;width:28.2px">3D</span></div>
<div class="sbox" style="left:794px;top:1418px;width:115.5px;height:61px;"><div class="stxt">size:640</div><div class="sdiv" style="width:103.5px"></div>
<div class="pchip" style="left:16px;">+</div>
<div class="ptxt" style="left:36px;">×640</div>
</div>
<div class="r" style="left:0px;top:1490px;width:1012px;height:2px;background:#4f4f4f;"></div>
<div id="n144" class="t" style="left:40px;top:1515.99px;font-family:'Liberation Sans', sans-serif;font-size:26px;font-weight:400;color:#cfcfcf;transform:scaleX(0.8988);transform-origin:left 0;">144</div>
<div class="t" style="left:563px;top:1500.77px;width:0;height:0;"><div id="nm144" class="t" style="right:0;top:0;font-family:'Liberation Sans', sans-serif;font-size:20px;font-weight:400;color:#fff;transform:scaleX(0.9315);transform-origin:right 0;text-underline-offset:1px;text-decoration-thickness:1.5px;">…<u>model_1/rnn_1/attention_rnn_cell_1/attention_1/sub:0</u></div></div>
<div class="chip" style="left:516.5px;top:1530px;width:50.5px;height:35px;">Sub</div>
<div class="lchip" style="left:588px;top:1522px;width:131px;height:40px;"><span style="left:8px;width:97px">float32</span></div>
<div class="lchip" style="left:727px;top:1522px;width:59px;height:40px;"><span style="left:8.7px;width:28.2px">3D</span></div>
<div class="sbox" style="left:794px;top:1496px;width:192.6px;height:61px;"><div class="stxt">size:48000</div><div class="sdiv" style="width:180.6px"></div>
<div class="pchip" style="left:16px;">-</div>
<div class="ptxt" style="left:36px;">×47360</div>
<div class="pchip" style="left:116px;">+</div>
<div class="ptxt" style="left:136px;">×640</div>
</div>
</div>
<div class="r" style="left:1518px;top:204px;width:1012px;height:8px;background:linear-gradient(rgba(195,195,195,0.95), rgba(70,70,70,0.7) 75%, rgba(48,48,48,0.3));"></div>
<div class="r" style="left:2px;top:1778px;width:2552px;height:2px;background:#4f4f4f;"></div>
<div class="r" style="left:2px;top:1780px;width:1494px;height:72px;background:#323232;"></div>
<div id="srccode" class="t" style="left:12px;top:1796.54px;font-family:'Liberation Mono', monospace;font-size:22px;font-weight:700;color:#fff;transform:scaleX(0.8951);transform-origin:left 0;">Source Code</div>
<div id="path" class="t" style="left:185px;top:1796.54px;font-family:'Liberation Mono', monospace;font-size:22px;font-weight:400;color:#fff;transform:scaleX(0.9054);transform-origin:left 0;">/root/code/src/model/attention_mechanism.py</div>
<div class="r" style="left:2px;top:1852px;width:1478px;height:2px;background:#565656;"></div>
<div class="r" style="left:2px;top:1853px;width:1478px;height:737px;background:#1e1e1e;overflow:hidden;">
<div class="r" style="left:111px;top:368px;width:613px;height:24px;background:#643a22;"></div>
<div class="r" style="left:58px;top:368px;width:10px;height:24px;background:#c8612b;"></div>
<div class="r" style="left:110px;top:0px;width:2px;height:737px;background:#404040;"></div>
<div class="r" style="left:158px;top:-23px;width:2px;height:30px;background:#404040;"></div>
<div class="r" style="left:206px;top:-23px;width:2px;height:30px;background:#404040;"></div>
<div class="r" style="left:158px;top:7px;width:2px;height:30px;background:#404040;"></div>
<div class="r" style="left:158px;top:97px;width:2px;height:30px;background:#404040;"></div>
<div class="r" style="left:158px;top:127px;width:2px;height:30px;background:#404040;"></div>
<div class="r" style="left:158px;top:157px;width:2px;height:30px;background:#404040;"></div>
<div class="r" style="left:158px;top:187px;width:2px;height:30px;background:#404040;"></div>
<div class="r" style="left:158px;top:217px;width:2px;height:30px;background:#404040;"></div>
<div class="r" style="left:158px;top:247px;width:2px;height:30px;background:#404040;"></div>
<div class="r" style="left:158px;top:277px;width:2px;height:30px;background:#404040;"></div>
<div class="r" style="left:158px;top:307px;width:2px;height:30px;background:#404040;"></div>
<div class="r" style="left:158px;top:337px;width:2px;height:30px;background:#404040;"></div>
<div class="r" style="left:158px;top:367px;width:2px;height:30px;background:#404040;"></div>
<div class="r" style="left:158px;top:397px;width:2px;height:30px;background:#404040;"></div>
<div class="r" style="left:158px;top:427px;width:2px;height:30px;background:#404040;"></div>
<div class="r" style="left:158px;top:457px;width:2px;height:30px;background:#404040;"></div>
<div class="r" style="left:158px;top:487px;width:2px;height:30px;background:#404040;"></div>
<div class="r" style="left:158px;top:517px;width:2px;height:30px;background:#404040;"></div>
<div class="r" style="left:158px;top:547px;width:2px;height:30px;background:#404040;"></div>
<div class="r" style="left:206px;top:547px;width:2px;height:30px;background:#404040;"></div>
<div class="r" style="left:158px;top:577px;width:2px;height:30px;background:#404040;"></div>
<div class="r" style="left:206px;top:577px;width:2px;height:30px;background:#404040;"></div>
<div class="r" style="left:158px;top:607px;width:2px;height:30px;background:#404040;"></div>
<div class="r" style="left:158px;top:637px;width:2px;height:30px;background:#404040;"></div>
<div class="r" style="left:158px;top:667px;width:2px;height:30px;background:#404040;"></div>
<div class="r" style="left:158px;top:697px;width:2px;height:30px;background:#404040;"></div>
<div class="r" style="left:158px;top:727px;width:2px;height:30px;background:#404040;"></div>
<div class="t" style="left:57px;top:-16.33px;width:0;height:0;"><div id="ln21" class="t" style="right:0;top:0;font-family:'Liberation Mono', monospace;font-size:20px;font-weight:400;color:#858585;">21</div></div>
<div id="code21" class="t" style="left:111px;top:-20.33px;font-family:'Liberation Mono', monospace;font-size:20px;font-weight:400;color:#d4d4d4;white-space:pre;">            units=3 * num_gaussians, activation="softplus", name=f"{self.name}_dense"</div>
<div class="t" style="left:57px;top:13.67px;width:0;height:0;"><div id="ln22" class="t" style="right:0;top:0;font-family:'Liberation Mono', monospace;font-size:20px;font-weight:400;color:#858585;">22</div></div>
<div id="code22" class="t" style="left:111px;top:13.67px;font-family:'Liberation Mono', monospace;font-size:20px;font-weight:400;color:#d4d4d4;white-space:pre;">        )</div>
<div class="t" style="left:57px;top:43.67px;width:0;height:0;"><div id="ln23" class="t" style="right:0;top:0;font-family:'Liberation Mono', monospace;font-size:20px;font-weight:400;color:#858585;">23</div></div>
<div class="t" style="left:57px;top:73.67px;width:0;height:0;"><div id="ln24" class="t" style="right:0;top:0;font-family:'Liberation Mono', monospace;font-size:20px;font-weight:400;color:#858585;">24</div></div>
<div id="code24" class="t" style="left:111px;top:73.67px;font-family:'Liberation Mono', monospace;font-size:20px;font-weight:400;color:#d4d4d4;white-space:pre;">    def call(self, inputs, prev_kappa, char_seq_one_hot, sequence_lengths):</div>
<div class="t" style="left:57px;top:103.67px;width:0;height:0;"><div id="ln25" class="t" style="right:0;top:0;font-family:'Liberation Mono', monospace;font-size:20px;font-weight:400;color:#858585;">25</div></div>
<div id="code25" class="t" style="left:111px;top:103.67px;font-family:'Liberation Mono', monospace;font-size:20px;font-weight:400;color:#d4d4d4;white-space:pre;">        # Generate concatenated attention parameters - just utilizing</div>
<div class="t" style="left:57px;top:133.67px;width:0;height:0;"><div id="ln26" class="t" style="right:0;top:0;font-family:'Liberation Mono', monospace;font-size:20px;font-weight:400;color:#858585;">26</div></div>
<div id="code26" class="t" style="left:111px;top:133.67px;font-family:'Liberation Mono', monospace;font-size:20px;font-weight:400;color:#d4d4d4;white-space:pre;">        # the dense layer so that I don't have to manually define the matrix</div>
<div class="t" style="left:57px;top:163.67px;width:0;height:0;"><div id="ln27" class="t" style="right:0;top:0;font-family:'Liberation Mono', monospace;font-size:20px;font-weight:400;color:#858585;">27</div></div>
<div id="code27" class="t" style="left:111px;top:163.67px;font-family:'Liberation Mono', monospace;font-size:20px;font-weight:400;color:#d4d4d4;white-space:pre;">        attention_params = self.dense_attention(inputs)</div>
<div class="t" style="left:57px;top:193.67px;width:0;height:0;"><div id="ln28" class="t" style="right:0;top:0;font-family:'Liberation Mono', monospace;font-size:20px;font-weight:400;color:#858585;">28</div></div>
<div id="code28" class="t" style="left:111px;top:193.67px;font-family:'Liberation Mono', monospace;font-size:20px;font-weight:400;color:#d4d4d4;white-space:pre;">        alpha, beta, kappa_increment = tf.split(attention_params, 3, axis=1)</div>
<div class="t" style="left:57px;top:223.67px;width:0;height:0;"><div id="ln29" class="t" style="right:0;top:0;font-family:'Liberation Mono', monospace;font-size:20px;font-weight:400;color:#858585;">29</div></div>
<div id="code29" class="t" style="left:111px;top:223.67px;font-family:'Liberation Mono', monospace;font-size:20px;font-weight:400;color:#d4d4d4;white-space:pre;">        char_len = tf.shape(char_seq_one_hot)[1]</div>
<div class="t" style="left:57px;top:253.67px;width:0;height:0;"><div id="ln30" class="t" style="right:0;top:0;font-family:'Liberation Mono', monospace;font-size:20px;font-weight:400;color:#858585;">30</div></div>
<div class="t" style="left:57px;top:283.67px;width:0;height:0;"><div id="ln31" class="t" style="right:0;top:0;font-family:'Liberation Mono', monospace;font-size:20px;font-weight:400;color:#858585;">31</div></div>
<div id="code31" class="t" style="left:111px;top:283.67px;font-family:'Liberation Mono', monospace;font-size:20px;font-weight:400;color:#d4d4d4;white-space:pre;">        # Normalize and clip kappa and beta...</div>
<div class="t" style="left:57px;top:313.67px;width:0;height:0;"><div id="ln32" class="t" style="right:0;top:0;font-family:'Liberation Mono', monospace;font-size:20px;font-weight:400;color:#858585;">32</div></div>
<div id="code32" class="t" style="left:111px;top:313.67px;font-family:'Liberation Mono', monospace;font-size:20px;font-weight:400;color:#d4d4d4;white-space:pre;">        # Not really sure why this is here, but sjvasquez does it so c'est la vie</div>
<div class="t" style="left:57px;top:343.67px;width:0;height:0;"><div id="ln33" class="t" style="right:0;top:0;font-family:'Liberation Mono', monospace;font-size:20px;font-weight:400;color:#858585;">33</div></div>
<div id="code33" class="t" style="left:111px;top:343.67px;font-family:'Liberation Mono', monospace;font-size:20px;font-weight:400;color:#d4d4d4;white-space:pre;">        kappa = prev_kappa + kappa_increment / 25.0</div>
<div class="t" style="left:57px;top:373.67px;width:0;height:0;"><div id="ln34" class="t" style="right:0;top:0;font-family:'Liberation Mono', monospace;font-size:20px;font-weight:400;color:#858585;">34</div></div>
<div id="code34" class="t" style="left:111px;top:373.67px;font-family:'Liberation Mono', monospace;font-size:20px;font-weight:400;color:#d4d4d4;white-space:pre;">        beta = tf.clip_by_value(beta, 0.01, np.inf)</div>
<div class="t" style="left:57px;top:403.67px;width:0;height:0;"><div id="ln35" class="t" style="right:0;top:0;font-family:'Liberation Mono', monospace;font-size:20px;font-weight:400;color:#858585;">35</div></div>
<div class="t" style="left:57px;top:433.67px;width:0;height:0;"><div id="ln36" class="t" style="right:0;top:0;font-family:'Liberation Mono', monospace;font-size:20px;font-weight:400;color:#858585;">36</div></div>
<div id="code36" class="t" style="left:111px;top:433.67px;font-family:'Liberation Mono', monospace;font-size:20px;font-weight:400;color:#d4d4d4;white-space:pre;">        # Tiling 'enum' across batch size and number of attention mixture components</div>
<div class="t" style="left:57px;top:463.67px;width:0;height:0;"><div id="ln37" class="t" style="right:0;top:0;font-family:'Liberation Mono', monospace;font-size:20px;font-weight:400;color:#858585;">37</div></div>
<div id="code37" class="t" style="left:111px;top:463.67px;font-family:'Liberation Mono', monospace;font-size:20px;font-weight:400;color:#d4d4d4;white-space:pre;">        batch_size = tf.shape(inputs)[0]</div>
<div class="t" style="left:57px;top:493.67px;width:0;height:0;"><div id="ln38" class="t" style="right:0;top:0;font-family:'Liberation Mono', monospace;font-size:20px;font-weight:400;color:#858585;">38</div></div>
<div id="code38" class="t" style="left:111px;top:493.67px;font-family:'Liberation Mono', monospace;font-size:20px;font-weight:400;color:#d4d4d4;white-space:pre;">        enum = tf.reshape(tf.range(char_len), (1, 1, char_len))</div>
<div class="t" style="left:57px;top:523.67px;width:0;height:0;"><div id="ln39" class="t" style="right:0;top:0;font-family:'Liberation Mono', monospace;font-size:20px;font-weight:400;color:#858585;">39</div></div>
<div id="code39" class="t" style="left:111px;top:523.67px;font-family:'Liberation Mono', monospace;font-size:20px;font-weight:400;color:#d4d4d4;white-space:pre;">        u = tf.cast(</div>
<div class="t" style="left:57px;top:553.67px;width:0;height:0;"><div id="ln40" class="t" style="right:0;top:0;font-family:'Liberation Mono', monospace;font-size:20px;font-weight:400;color:#858585;">40</div></div>
<div id="code40" class="t" style="left:111px;top:553.67px;font-family:'Liberation Mono', monospace;font-size:20px;font-weight:400;color:#d4d4d4;white-space:pre;">            tf.tile(enum, (batch_size, self.num_gaussians, 1)),</div>
<div class="t" style="left:57px;top:583.67px;width:0;height:0;"><div id="ln41" class="t" style="right:0;top:0;font-family:'Liberation Mono', monospace;font-size:20px;font-weight:400;color:#858585;">41</div></div>
<div id="code41" class="t" style="left:111px;top:583.67px;font-family:'Liberation Mono', monospace;font-size:20px;font-weight:400;color:#d4d4d4;white-space:pre;">            tf.float32,</div>
<div class="t" style="left:57px;top:613.67px;width:0;height:0;"><div id="ln42" class="t" style="right:0;top:0;font-family:'Liberation Mono', monospace;font-size:20px;font-weight:400;color:#858585;">42</div></div>
<div id="code42" class="t" style="left:111px;top:613.67px;font-family:'Liberation Mono', monospace;font-size:20px;font-weight:400;color:#d4d4d4;white-space:pre;">        )</div>
<div class="t" style="left:57px;top:643.67px;width:0;height:0;"><div id="ln43" class="t" style="right:0;top:0;font-family:'Liberation Mono', monospace;font-size:20px;font-weight:400;color:#858585;">43</div></div>
<div class="t" style="left:57px;top:673.67px;width:0;height:0;"><div id="ln44" class="t" style="right:0;top:0;font-family:'Liberation Mono', monospace;font-size:20px;font-weight:400;color:#858585;">44</div></div>
<div id="code44" class="t" style="left:111px;top:673.67px;font-family:'Liberation Mono', monospace;font-size:20px;font-weight:400;color:#d4d4d4;white-space:pre;">        # Calculating the Gaussian window</div>
<div class="t" style="left:57px;top:703.67px;width:0;height:0;"><div id="ln45" class="t" style="right:0;top:0;font-family:'Liberation Mono', monospace;font-size:20px;font-weight:400;color:#858585;">45</div></div>
<div id="code45" class="t" style="left:111px;top:703.67px;font-family:'Liberation Mono', monospace;font-size:20px;font-weight:400;color:#d4d4d4;white-space:pre;">        kappa = tf.expand_dims(kappa, axis=2)</div>
<div class="t" style="left:57px;top:733.67px;width:0;height:0;"><div id="ln46" class="t" style="right:0;top:0;font-family:'Liberation Mono', monospace;font-size:20px;font-weight:400;color:#858585;">46</div></div>
<div id="code46" class="t" style="left:111px;top:733.67px;font-family:'Liberation Mono', monospace;font-size:20px;font-weight:400;color:#d4d4d4;white-space:pre;">        alpha = tf.expand_dims(alpha, axis=2)</div>
<div class="r" style="left:1244px;top:0px;width:206px;height:737px;background:#1e1e1e;"></div>
<div class="r" style="left:1251px;top:1px;width:199px;height:4px;background:#233b5c;"></div>
<pre class="r" style="left:1251.6px;top:-0.5px;margin:0;font-family:'Liberation Mono', monospace;font-size:20px;line-height:30px;color:#d0d0d0;font-weight:700;transform:scale(0.1685,0.13333);transform-origin:0 0;white-space:pre;">import tensorflow as tf
import numpy as np


@tf.keras.utils.register_keras_serializable()
class AttentionMechanism(tf.keras.layers.Layer):
    """
    Attention mechanism for the handwriting synthesis model.
    This is a version of the attention mechanism used in
    the original paper by Alex Graves. It uses a Gaussian
    window to focus on different parts of the character sequence
    at each time step.
    """

    def __init__(self, num_gaussians, num_chars, name="attention", **kwargs):
        super(AttentionMechanism, self).__init__(**kwargs)
        self.num_gaussians = num_gaussians
        self.num_chars = num_chars
        self.name = name
        self.dense_attention = tf.keras.layers.Dense(
            units=3 * num_gaussians, activation="softplus", name=f"{self.name}_dense"
        )

    def call(self, inputs, prev_kappa, char_seq_one_hot, sequence_lengths):
        # Generate concatenated attention parameters - just utilizing
        # the dense layer so that I don't have to manually define the matrix
        attention_params = self.dense_attention(inputs)
        alpha, beta, kappa_increment = tf.split(attention_params, 3, axis=1)
        char_len = tf.shape(char_seq_one_hot)[1]

        # Normalize and clip kappa and beta...
        # Not really sure why this is here, but sjvasquez does it so c'est la vie
        kappa = prev_kappa + kappa_increment / 25.0
        beta = tf.clip_by_value(beta, 0.01, np.inf)

        # Tiling 'enum' across batch size and number of attention mixture components
        batch_size = tf.shape(inputs)[0]
        enum = tf.reshape(tf.range(char_len), (1, 1, char_len))
        u = tf.cast(
            tf.tile(enum, (batch_size, self.num_gaussians, 1)),
            tf.float32,
        )

        # Calculating the Gaussian window
        kappa = tf.expand_dims(kappa, axis=2)
        alpha = tf.expand_dims(alpha, axis=2)
        beta = tf.expand_dims(beta, axis=2)
        phi = tf.reduce_sum(alpha * tf.exp(-tf.square(kappa - u) / beta), axis=1)
        phi = tf.expand_dims(phi, axis=2)

        # Applying attention weights to the character sequences
        sequence_mask = tf.cast(
            tf.sequence_mask(sequence_lengths, maxlen=char_len), tf.float32
        )
        sequence_mask = tf.expand_dims(sequence_mask, axis=2)
        w = tf.reduce_sum(phi * char_seq_one_hot * sequence_mask, axis=1)
        return w, tf.squeeze(kappa, axis=2)

    def get_config(self):
        config = super().get_config()
        config.update(
            {
                "num_gaussians": self.num_gaussians,
                "num_chars": self.num_chars,
                "name": self.name,
            }
        )
        return config

    @classmethod
    def from_config(cls, config):
        return cls(**config)


@tf.keras.utils.register_keras_serializable()
class AttentionMechanismBatch(tf.keras.layers.Layer):
    """
    Deprecated. Does not make sense to use the attention
    mechanism in a batched manner. This is kept for reference
    """

    def __init__(self, num_gaussians, num_chars, name="attention", **kwargs) -&gt; None:
        super().__init__(**kwargs)
        self.num_gaussians = num_gaussians
        self.num_chars = num_chars
        self.name = name
        self.dense_attention = tf.keras.layers.Dense(
            units=3 * num_gaussians,
            activation="softplus",
            name=f"{self.name}_dense",
        )

    def call(self, inputs, prev_kappa, char_seq_one_hot, char_seq_len):
        # Assumes inputs is of shape (batch_size, timesteps, features)
        attention_params = self.dense_attention(inputs)
        alpha, beta, kappa_increment = tf.split(attention_params, 3, axis=-1)

        kappa = prev_kappa + kappa_increment / 25.0
        beta = tf.clip_by_value(beta, 0.01, np.inf)

        char_len = tf.shape(char_seq_one_hot)[1]
        batch_size = tf.shape(inputs)[0]
        timesteps = tf.shape(inputs)[1]

        enum = tf.reshape(tf.range(char_len), (1, 1, 1, char_len))
        u = tf.cast(
            tf.tile(enum, (batch_size, timesteps, self.num_gaussians, 1)), tf.float32
        )

        kappa = tf.expand_dims(kappa, axis=-1)
        alpha = tf.expand_dims(alpha, axis=-1)
        beta = tf.expand_dims(beta, axis=-1)

        phi = tf.reduce_sum(alpha * tf.exp(-tf.square(kappa - u) / beta), axis=2)
        phi = tf.expand_dims(phi, axis=3)

        # Create a sequence mask based on char_seq_len, expanded for broadcasting
        sequence_mask = tf.sequence_mask(
            char_seq_len, maxlen=char_len, dtype=tf.float32
        )
        # (batch_size, timesteps, 1, 1) for broadcasting
        sequence_mask = tf.expand_dims(sequence_mask, axis=1)

        # Apply the mask to phi before summing over the characters
        # This ensures attention is only applied to valid parts of the sequence
        phi_masked = phi * sequence_mask

        # Calculate weighted sum of character sequences, applying the mask
        w = tf.reduce_sum(phi_masked * char_seq_one_hot, axis=2)

        return w, kappa
</pre>
<div class="r" style="left:1238px;top:0px;width:6px;height:14px;background:linear-gradient(90deg, rgba(0,0,0,0), rgba(0,0,0,0.5));"></div>
<div class="r" style="left:1450px;top:0px;width:2px;height:737px;background:#303030;"></div>
<div class="r" style="left:1452px;top:0px;width:26px;height:737px;background:#1e1e1e;"></div>
<div class="r" style="left:1452px;top:0px;width:26px;height:5px;background:#797979;"></div>
</div>
<div class="r" style="left:1496px;top:1793px;width:2px;height:718px;background:#595959;"></div>
<div id="stacktrace" class="t" style="left:1515px;top:1796.14px;font-family:'Liberation Mono', monospace;font-size:22px;font-weight:700;color:#fff;transform:scaleX(0.8951);transform-origin:left 0;">Stack Trace</div>
<div class="r" style="left:1514px;top:1940px;width:1016px;height:650px;overflow:hidden;">
<div id="sf0" class="t" style="left:0px;top:-20.86px;font-family:'Liberation Mono', monospace;font-size:22px;font-weight:400;color:#e6e6e6;transform:scaleX(0.9165);transform-origin:left 0;">tracing_compilation.py</div>
<div id="sl0" class="t" style="left:436px;top:4.14px;font-family:'Liberation Mono', monospace;font-size:22px;font-weight:400;color:#e6e6e6;transform:scaleX(0.9164);transform-origin:left 0;text-decoration:underline;">Line 643</div>
<div id="sn0" class="t" style="left:617px;top:4.14px;font-family:'Liberation Mono', monospace;font-size:22px;font-weight:400;color:#e6e6e6;transform:scaleX(0.9164);transform-origin:left 0;">_initialize</div>
<div class="r" style="left:0px;top:26px;width:1016px;height:2px;background:#b5b5b5;"></div>
<div id="sf1" class="t" style="left:0px;top:33.14px;font-family:'Liberation Mono', monospace;font-size:22px;font-weight:400;color:#e6e6e6;transform:scaleX(0.9165);transform-origin:left 0;">tracing_compilation.py</div>
<div id="sl1" class="t" style="left:436px;top:58.14px;font-family:'Liberation Mono', monospace;font-size:22px;font-weight:400;color:#e6e6e6;transform:scaleX(0.9164);transform-origin:left 0;text-decoration:underline;">Line 178</div>
<div id="sn1" class="t" style="left:617px;top:58.14px;font-family:'Liberation Mono', monospace;font-size:22px;font-weight:400;color:#e6e6e6;transform:scaleX(0.9164);transform-origin:left 0;">trace_function</div>
<div class="r" style="left:0px;top:80px;width:1016px;height:2px;background:#b5b5b5;"></div>
<div id="sf2" class="t" style="left:0px;top:87.14px;font-family:'Liberation Mono', monospace;font-size:22px;font-weight:400;color:#e6e6e6;transform:scaleX(0.9165);transform-origin:left 0;">tracing_compilation.py</div>
<div id="sl2" class="t" style="left:436px;top:112.14px;font-family:'Liberation Mono', monospace;font-size:22px;font-weight:400;color:#e6e6e6;transform:scaleX(0.9164);transform-origin:left 0;text-decoration:underline;">Line 283</div>
<div id="sn2" class="t" style="left:617px;top:112.14px;font-family:'Liberation Mono', monospace;font-size:22px;font-weight:400;color:#e6e6e6;transform:scaleX(0.9165);transform-origin:left 0;">_maybe_define_function</div>
<div class="r" style="left:0px;top:134px;width:1016px;height:2px;background:#b5b5b5;"></div>
<div id="sf3" class="t" style="left:0px;top:141.14px;font-family:'Liberation Mono', monospace;font-size:22px;font-weight:400;color:#e6e6e6;transform:scaleX(0.9165);transform-origin:left 0;">tracing_compilation.py</div>
<div id="sl3" class="t" style="left:436px;top:166.14px;font-family:'Liberation Mono', monospace;font-size:22px;font-weight:400;color:#e6e6e6;transform:scaleX(0.9164);transform-origin:left 0;text-decoration:underline;">Line 310</div>
<div id="sn3" class="t" style="left:617px;top:166.14px;font-family:'Liberation Mono', monospace;font-size:22px;font-weight:400;color:#e6e6e6;transform:scaleX(0.9165);transform-origin:left 0;">_create_concrete_function</div>
<div class="r" style="left:0px;top:188px;width:1016px;height:2px;background:#b5b5b5;"></div>
<div id="sf4" class="t" style="left:0px;top:195.14px;font-family:'Liberation Mono', monospace;font-size:22px;font-weight:400;color:#e6e6e6;transform:scaleX(0.9164);transform-origin:left 0;">func_graph.py</div>
<div id="sl4" class="t" style="left:436px;top:220.14px;font-family:'Liberation Mono', monospace;font-size:22px;font-weight:400;color:#e6e6e6;transform:scaleX(0.9164);transform-origin:left 0;text-decoration:underline;">Line 1059</div>
<div id="sn4" class="t" style="left:617px;top:220.14px;font-family:'Liberation Mono', monospace;font-size:22px;font-weight:400;color:#e6e6e6;transform:scaleX(0.9165);transform-origin:left 0;">func_graph_from_py_func</div>
<div class="r" style="left:0px;top:242px;width:1016px;height:2px;background:#b5b5b5;"></div>
<div id="sf5" class="t" style="left:0px;top:249.14px;font-family:'Liberation Mono', monospace;font-size:22px;font-weight:400;color:#e6e6e6;transform:scaleX(0.9165);transform-origin:left 0;">polymorphic_function.py</div>
<div id="sl5" class="t" style="left:436px;top:274.14px;font-family:'Liberation Mono', monospace;font-size:22px;font-weight:400;color:#e6e6e6;transform:scaleX(0.9164);transform-origin:left 0;text-decoration:underline;">Line 599</div>
<div id="sn5" class="t" style="left:617px;top:274.14px;font-family:'Liberation Mono', monospace;font-size:22px;font-weight:400;color:#e6e6e6;transform:scaleX(0.9164);transform-origin:left 0;">wrapped_fn</div>
<div class="r" style="left:0px;top:296px;width:1016px;height:2px;background:#b5b5b5;"></div>
<div id="sf6" class="t" style="left:0px;top:303.14px;font-family:'Liberation Mono', monospace;font-size:22px;font-weight:400;color:#e6e6e6;transform:scaleX(0.9165);transform-origin:left 0;">autograph_util.py</div>
<div id="sl6" class="t" style="left:436px;top:328.14px;font-family:'Liberation Mono', monospace;font-size:22px;font-weight:400;color:#e6e6e6;transform:scaleX(0.9164);transform-origin:left 0;text-decoration:underline;">Line 41</div>
<div id="sn6" class="t" style="left:617px;top:328.14px;font-family:'Liberation Mono', monospace;font-size:22px;font-weight:400;color:#e6e6e6;transform:scaleX(0.9165);transform-origin:left 0;">autograph_handler</div>
<div class="r" style="left:0px;top:350px;width:1016px;height:2px;background:#b5b5b5;"></div>
<div id="sf7" class="t" style="left:0px;top:357.14px;font-family:'Liberation Mono', monospace;font-size:22px;font-weight:400;color:#e6e6e6;transform:scaleX(0.9164);transform-origin:left 0;">api.py</div>
<div id="sl7" class="t" style="left:436px;top:382.14px;font-family:'Liberation Mono', monospace;font-size:22px;font-weight:400;color:#e6e6e6;transform:scaleX(0.9164);transform-origin:left 0;text-decoration:underline;">Line 339</div>
<div id="sn7" class="t" style="left:617px;top:382.14px;font-family:'Liberation Mono', monospace;font-size:22px;font-weight:400;color:#e6e6e6;transform:scaleX(0.9164);transform-origin:left 0;">converted_call</div>
<div class="r" style="left:0px;top:404px;width:1016px;height:2px;background:#b5b5b5;"></div>
<div id="sf8" class="t" style="left:0px;top:411.14px;font-family:'Liberation Mono', monospace;font-size:22px;font-weight:400;color:#e6e6e6;transform:scaleX(0.9164);transform-origin:left 0;">api.py</div>
<div id="sl8" class="t" style="left:436px;top:436.14px;font-family:'Liberation Mono', monospace;font-size:22px;font-weight:400;color:#e6e6e6;transform:scaleX(0.9164);transform-origin:left 0;text-decoration:underline;">Line 459</div>
<div id="sn8" class="t" style="left:617px;top:436.14px;font-family:'Liberation Mono', monospace;font-size:22px;font-weight:400;color:#e6e6e6;transform:scaleX(0.9165);transform-origin:left 0;">_call_unconverted</div>
<div class="r" style="left:0px;top:458px;width:1016px;height:2px;background:#b5b5b5;"></div>
<div id="sf9" class="t" style="left:0px;top:465.14px;font-family:'Liberation Mono', monospace;font-size:22px;font-weight:400;color:#e6e6e6;transform:scaleX(0.9164);transform-origin:left 0;">api.py</div>
<div id="sl9" class="t" style="left:436px;top:490.14px;font-family:'Liberation Mono', monospace;font-size:22px;font-weight:400;color:#e6e6e6;transform:scaleX(0.9164);transform-origin:left 0;text-decoration:underline;">Line 643</div>
<div id="sn9" class="t" style="left:617px;top:490.14px;font-family:'Liberation Mono', monospace;font-size:22px;font-weight:400;color:#e6e6e6;transform:scaleX(0.9164);transform-origin:left 0;">wrapper</div>
<div class="r" style="left:0px;top:512px;width:1016px;height:2px;background:#b5b5b5;"></div>
<div id="sf10" class="t" style="left:0px;top:519.14px;font-family:'Liberation Mono', monospace;font-size:22px;font-weight:400;color:#e6e6e6;transform:scaleX(0.9164);transform-origin:left 0;">trainer.py</div>
<div id="sl10" class="t" style="left:436px;top:544.14px;font-family:'Liberation Mono', monospace;font-size:22px;font-weight:400;color:#e6e6e6;transform:scaleX(0.9164);transform-origin:left 0;text-decoration:underline;">Line 122</div>
<div id="sn10" class="t" style="left:617px;top:544.14px;font-family:'Liberation Mono', monospace;font-size:22px;font-weight:400;color:#e6e6e6;transform:scaleX(0.9165);transform-origin:left 0;">one_step_on_iterator</div>
<div class="r" style="left:0px;top:566px;width:1016px;height:2px;background:#b5b5b5;"></div>
</div>
<div class="r" style="left:1512px;top:1822px;width:1042px;height:134px;background:#303030;border-left:1px solid #282828;"></div>
<div id="cgo" class="t" style="left:1562.6px;top:1852.14px;font-family:'Liberation Mono', monospace;font-size:22px;font-weight:400;color:#f0f0f0;transform:scaleX(0.9089);transform-origin:left 0;">Creation of graph op</div>
<div id="cgo2" class="t" style="left:1562.6px;top:1877.74px;font-family:'Liberation Mono', monospace;font-size:22px;font-weight:400;color:#f0f0f0;transform:scaleX(0.9089);transform-origin:left 0;">"deep_handwriting_synthesis_model_1/rnn_1/attention_rnn_cell_1/attention_1/clip_by_v</div>
<div id="cgo3" class="t" style="left:1562.6px;top:1905.14px;font-family:'Liberation Mono', monospace;font-size:22px;font-weight:400;color:#f0f0f0;transform:scaleX(0.9089);transform-origin:left 0;">alue/Minimum/y"</div>
<div class="chip" style="left:1755px;top:1898px;width:74px;height:33px;line-height:33px;">Const</div>
<div id="host" class="t" style="left:1562.6px;top:1931.64px;font-family:'Liberation Mono', monospace;font-size:22px;font-weight:400;color:#8c8c8c;transform:scaleX(0.9089);transform-origin:left 0;">(Host name: 11a46af3a4bf)</div>
<div class="r" style="left:1514px;top:1960px;width:1040px;height:6px;background:linear-gradient(rgba(200,200,200,0.9), rgba(60,60,60,0.7));"></div>
<div class="r" style="left:1514px;top:1966px;width:1016px;height:2px;background:#b5b5b5;"></div>
<div class="r" style="left:2530px;top:1960px;width:24px;height:550px;background:#f9f9f9;"></div>
<div class="r" style="left:2539px;top:2012px;width:15px;height:57px;background:#c1c1c1;border-radius:8px;"></div>
<div class="r" style="left:2481px;top:2470px;width:90px;height:38px;box-sizing:border-box;background:#222;border:2px solid #d8d8d8;"></div>
<div id="click" class="t" style="left:2494px;top:2476.84px;font-family:'Liberation Sans', sans-serif;font-size:25px;font-weight:700;color:#fff;transform:scaleX(0.8530);transform-origin:left 0;">Click t</div>
<div class="r" style="left:0px;top:0px;width:2px;height:2590px;background:rgba(255,255,255,0.7);"></div>
</body></html>
